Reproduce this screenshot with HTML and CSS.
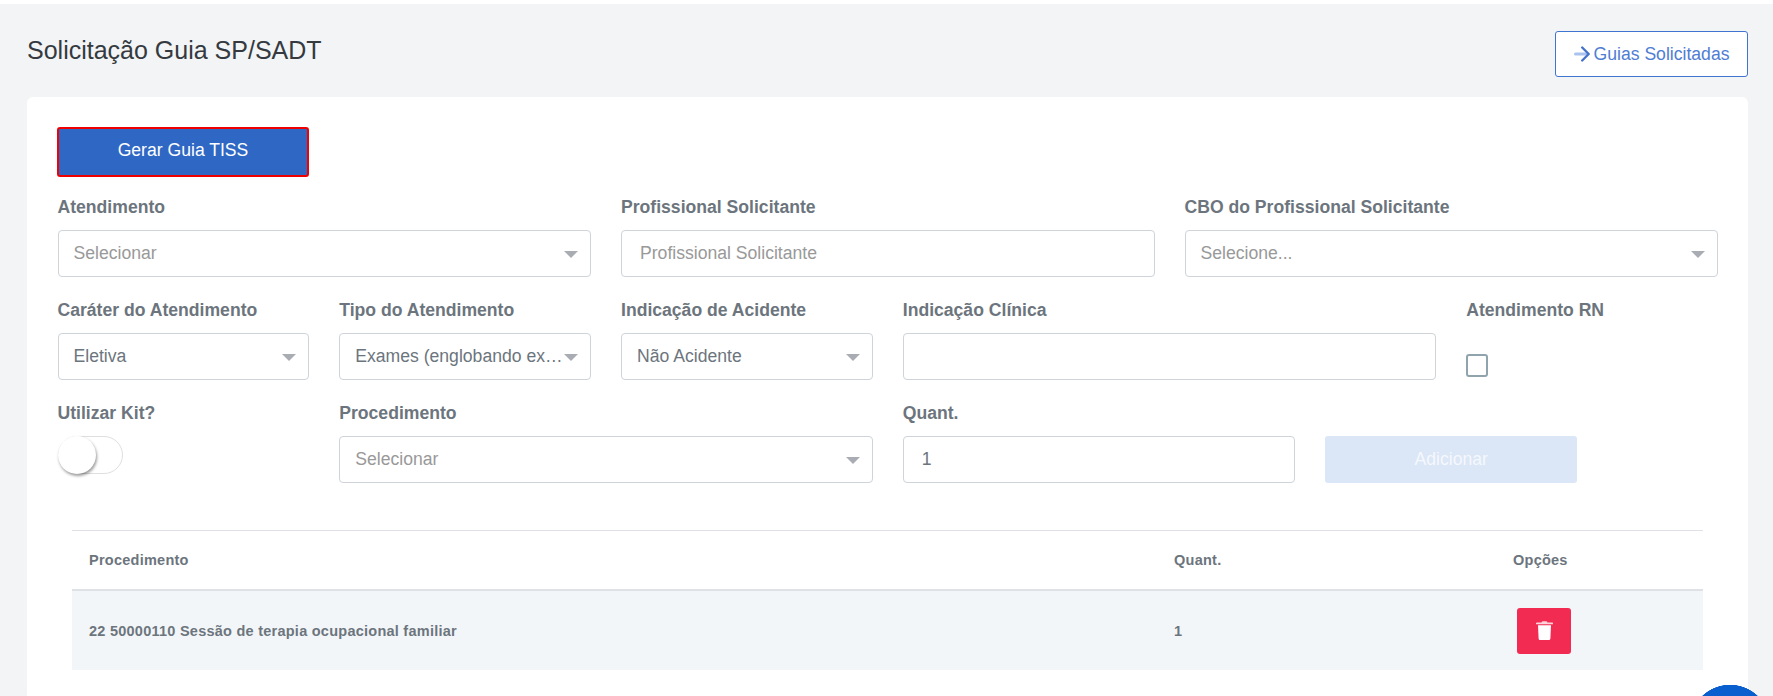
FILE: index.html
```html
<!DOCTYPE html>
<html lang="pt-BR">
<head>
    <meta charset="utf-8">
    <title>Solicitação Guia SP/SADT</title>
    <link rel="stylesheet" href="styles.css">
</head>
<body>
    <div class="page">
        <div class="page_header">
            <h1>Solicitação Guia SP/SADT</h1>
            <a class="btn_outline" href="#">
                <svg class="arrow_icon" viewBox="0 0 16 16" width="16" height="16" fill="none" stroke-linecap="round" stroke-linejoin="round">
                    <path class="arrow_shaft" d="M1.5 8h11"/>
                    <path class="arrow_head" d="M8.2 1.5l6.5 6.5-6.5 6.5"/>
                </svg>
                Guias Solicitadas
            </a>
        </div>

        <div class="card">
            <button class="btn_tiss" type="button">Gerar Guia TISS</button>

            <form class="form_grid">
                <div class="field span4">
                    <label>Atendimento</label>
                    <div class="select placeholder"><span>Selecionar</span></div>
                </div>
                <div class="field span4">
                    <label>Profissional Solicitante</label>
                    <input class="input" type="text" placeholder="Profissional Solicitante">
                </div>
                <div class="field span4">
                    <label>CBO do Profissional Solicitante</label>
                    <div class="select placeholder"><span>Selecione...</span></div>
                </div>

                <div class="field span2">
                    <label>Caráter do Atendimento</label>
                    <div class="select"><span>Eletiva</span></div>
                </div>
                <div class="field span2">
                    <label>Tipo do Atendimento</label>
                    <div class="select"><span>Exames (englobando ex…</span></div>
                </div>
                <div class="field span2">
                    <label>Indicação de Acidente</label>
                    <div class="select"><span>Não Acidente</span></div>
                </div>
                <div class="field span4">
                    <label>Indicação Clínica</label>
                    <input class="input" type="text">
                </div>
                <div class="field span2">
                    <label>Atendimento RN</label>
                    <span class="checkbox"></span>
                </div>

                <div class="field span2">
                    <label>Utilizar Kit?</label>
                    <span class="switch"><span class="knob"></span></span>
                </div>
                <div class="field span4">
                    <label>Procedimento</label>
                    <div class="select placeholder"><span>Selecionar</span></div>
                </div>
                <div class="field span3">
                    <label>Quant.</label>
                    <input class="input" type="text" value="1">
                </div>
                <div class="field span2 field_button">
                    <button class="btn_add" type="button">Adicionar</button>
                </div>
            </form>

            <table class="table">
                <colgroup>
                    <col class="col_proc">
                    <col class="col_qty">
                    <col>
                </colgroup>
                <thead>
                    <tr>
                        <th>Procedimento</th>
                        <th>Quant.</th>
                        <th>Opções</th>
                    </tr>
                </thead>
                <tbody>
                    <tr>
                        <td>22 50000110 Sessão de terapia ocupacional familiar</td>
                        <td>1</td>
                        <td>
                            <button class="btn_delete" type="button">
                                <svg viewBox="0 0 17 19" width="17" height="19">
                                    <path class="trash_lid" d="M5.5 1.4C5.7.6 6.2.2 7 .2h3c.8 0 1.3.4 1.5 1.2H16c.6 0 1 .4 1 .9v1H0v-1c0-.5.4-.9 1-.9z"/>
                                    <path class="trash_body" d="M2 4.2h13l-.6 13.3c0 .9-.6 1.5-1.5 1.5H4.100c-.9 0-1.500-.6-1.500-1.500z"/>
                                </svg>
                            </button>
                        </td>
                    </tr>
                </tbody>
            </table>
        </div>
    </div>
    <div class="chat_bubble"></div>
</body>
</html>
```

FILE: styles.css
```css
html, body {
    height: 100%;
    margin: 0;
    overflow: hidden;
}
body {
    background: #fff;
    color: #6c757d;
    font-family: "Liberation Sans", Arial, sans-serif;
    font-size: 17.6px;
}
.page {
    box-sizing: border-box;
    height: 692px;
    margin-top: 4px;
    padding: 27px 25px 0 27px;
    background: #f3f4f6;
    overflow: hidden;
}
.page_header {
    display: flex;
    justify-content: space-between;
    align-items: flex-start;
    margin-bottom: 20px;
}
h1 {
    margin: 0;
    font-size: 25px;
    font-weight: 400;
    line-height: 38px;
    color: #343a40;
}
.btn_outline {
    display: flex;
    align-items: center;
    justify-content: center;
    gap: 4px;
    box-sizing: border-box;
    width: 193px;
    height: 46px;
    border: 1px solid #3f74d1;
    border-radius: 3px;
    background: #fff;
    color: #4f7dd3;
    font-size: 17.6px;
    text-decoration: none;
}
.arrow_shaft {
    stroke: #a9c2ee;
    stroke-width: 3;
}
.arrow_head {
    stroke: #4472c9;
    stroke-width: 2.4;
}
.card {
    padding: 30px;
    border-radius: 6px;
    background: #fff;
}
.btn_tiss {
    display: block;
    box-sizing: border-box;
    width: 252px;
    height: 50px;
    border: 2px solid #f00000;
    border-radius: 3px;
    background: #2f68c4;
    color: #fff;
    font-family: inherit;
    font-size: 17.6px;
    padding: 0 0 4px;
}
.form_grid {
    display: grid;
    grid-template-columns: repeat(12, 1fr);
    column-gap: 30px;
    row-gap: 21px;
    margin: 18px 0 0 0.5px;
}
.span2 { grid-column: span 2; min-width: 0; }
.span3 { grid-column: span 3; min-width: 0; }
.span4 { grid-column: span 4; min-width: 0; }
label {
    display: block;
    margin-bottom: 11px;
    font-size: 17.6px;
    font-weight: 700;
    line-height: 24px;
    color: #6c757d;
}
.input, .select {
    display: block;
    box-sizing: border-box;
    width: 100%;
    height: 47px;
    border: 1px solid #ced4da;
    border-radius: 4px;
    background: #fff;
    color: #6c757d;
    font-family: inherit;
    font-size: 17.6px;
}
.input {
    padding: 0 18px;
}
.input::placeholder {
    color: #999;
}
.select {
    position: relative;
    display: flex;
    align-items: center;
    padding: 0 30px 0 15px;
}
.select span {
    white-space: nowrap;
}
.select::after {
    content: "";
    position: absolute;
    right: 12px;
    top: 20px;
    border-left: 7px solid transparent;
    border-right: 7px solid transparent;
    border-top: 7px solid #a9adb3;
}
.placeholder {
    color: #999;
}
.checkbox {
    display: block;
    box-sizing: border-box;
    width: 22px;
    height: 23px;
    margin-top: 32px;
    border: 2px solid #90a4ae;
    border-radius: 3px;
}
.switch {
    position: relative;
    display: block;
    box-sizing: border-box;
    width: 65px;
    height: 38px;
    border: 1px solid #dfdfdf;
    border-radius: 20px;
}
.knob {
    position: absolute;
    left: -1px;
    top: -1px;
    width: 38px;
    height: 38px;
    border-radius: 50%;
    background: #fff;
    box-shadow: 1px 2px 3px rgba(0, 0, 0, 0.4);
}
.field_button {
    padding-top: 35px;
}
.btn_add {
    display: block;
    width: 100%;
    height: 47px;
    border: 0;
    border-radius: 3px;
    background: #dbe6f6;
    color: #f5f8fd;
    font-family: inherit;
    font-size: 17.6px;
}
.table {
    width: calc(100% - 30px);
    margin: 47px 15px 0;
    border-collapse: collapse;
    table-layout: fixed;
    font-size: 14.5px;
    font-weight: 700;
    letter-spacing: 0.25px;
    color: #6c757d;
}
.col_proc { width: 1085px; }
.col_qty { width: 339px; }
th, td {
    padding: 0 0 0 17px;
    text-align: left;
}
th {
    height: 58px;
    border-top: 1px solid #dee2e6;
    border-bottom: 2px solid #dee2e6;
}
td {
    height: 79px;
    background: #f3f6f9;
}
.btn_delete {
    display: flex;
    align-items: center;
    justify-content: center;
    width: 54px;
    height: 46px;
    margin-left: 4px;
    border: 0;
    border-radius: 3px;
    background: #f12b52;
    padding: 0;
}
.trash_lid {
    fill: #ffd3dc;
}
.trash_body {
    fill: #fff;
}
.chat_bubble {
    position: fixed;
    left: 1690px;
    bottom: 0;
    width: 80px;
    height: 11px;
    background: radial-gradient(circle at 40px 40px, #0a5fce 40px, transparent 40.5px);
}
```
